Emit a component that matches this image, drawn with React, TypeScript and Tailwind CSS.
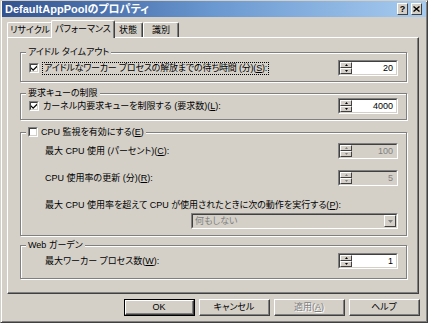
import React, { FC, ReactNode } from 'react'

const font = "font-['Liberation_Sans','Noto_Sans_CJK_JP',sans-serif] [font-feature-settings:'palt']"

const Arrow: FC<{ up?: boolean; color?: string; small?: boolean }> = ({ up, color = '#000', small }) => {
  const w = small ? 3 : 5
  const h = small ? 2 : 3
  return (
    <svg width={w} height={h} viewBox={`0 0 ${w} ${h}`}>
      <polygon points={up ? `${w / 2},0 ${w},${h} 0,${h}` : `0,0 ${w},0 ${w / 2},${h}`} fill={color} />
    </svg>
  )
}

const SpinBtn: FC<{ up?: boolean; disabled?: boolean }> = ({ up, disabled }) => (
  <div className="flex flex-1 items-center justify-center border border-t-white border-l-white border-r-[#404040] border-b-[#404040] bg-[#d4d0c8]">
    <Arrow up={up} small color={disabled ? '#808080' : '#000'} />
  </div>
)

const Spinner: FC<{ value: string; disabled?: boolean }> = ({ value, disabled }) => (
  <div className="h-[16px] w-[60px] border border-[#808080] border-r-white border-b-white">
    <div className="flex h-full w-full border border-[#404040] border-r-[#d4d0c8] border-b-[#d4d0c8]">
      <div className="flex w-[12px] flex-col">
        <SpinBtn up disabled={disabled} />
        <SpinBtn disabled={disabled} />
      </div>
      <div
        className={`flex flex-1 items-center justify-end pr-[3px] leading-[12px] ${
          disabled ? 'bg-[#d4d0c8] text-[#808080]' : 'bg-white text-black'
        }`}
      >
        {value}
      </div>
    </div>
  </div>
)

const Check: FC<{ checked?: boolean }> = ({ checked }) => (
  <div className="h-[10px] w-[10px] shrink-0 border border-[#808080] border-r-white border-b-white">
    <div className="flex h-full w-full items-center justify-center border border-[#404040] border-r-[#d4d0c8] border-b-[#d4d0c8] bg-white">
      {checked && (
        <svg width="6" height="6" viewBox="0 0 7 7">
          <path d="M0 2.5 L2.5 5 L7 0.5 V2.5 L2.5 7 L0 4.5 Z" fill="#000" />
        </svg>
      )}
    </div>
  </div>
)

const Group: FC<{ label: ReactNode; className?: string; children: ReactNode }> = ({ label, className, children }) => (
  <div
    className={`relative border border-[#808080] shadow-[1px_1px_0_#fff,inset_1px_1px_0_#fff] ${className ?? ''}`}
  >
    <div className="absolute -top-[7px] left-[5px] flex items-center gap-[3px] bg-[#d4d0c8] px-[2px] leading-[12px]">
      {label}
    </div>
    {children}
  </div>
)

const Button: FC<{ children: ReactNode; def?: boolean; disabled?: boolean }> = ({ children, def, disabled }) => (
  <div className={`h-[17px] w-[71px] ${def ? 'border border-black' : ''}`}>
    <div className="h-full w-full border border-t-white border-l-white border-r-[#404040] border-b-[#404040]">
      <div
        className={`flex h-full w-full items-center justify-center border-r border-b border-[#808080] leading-[12px] ${
          disabled ? 'text-[#808080] [text-shadow:1px_1px_0_#fff]' : 'text-black'
        }`}
      >
        {children}
      </div>
    </div>
  </div>
)

const Tab: FC<{ children: ReactNode; w: string; active?: boolean }> = ({ children, w, active }) => (
  <div
    className={`flex items-center justify-center rounded-t-[2px] border border-b-0 border-t-white border-l-white border-r-[#404040] bg-[#d4d0c8] leading-[12px] shadow-[inset_-1px_0_0_#808080] ${w} ${
      active ? 'relative z-10 -mx-[2px] -mb-px h-[18px] pb-[2px]' : 'h-[15px]'
    }`}
  >
    {children}
  </div>
)

const App: FC = () => {
  return (
    <div className={`h-[323px] w-[428px] bg-[#d4d0c8] text-[9px] text-black ${font}`}>
      <div className="flex h-full w-full flex-col border border-t-[#d4d0c8] border-l-[#d4d0c8] border-r-[#404040] border-b-[#404040] shadow-[inset_1px_1px_0_#fff,inset_-1px_-1px_0_#808080]">
        {/* title bar */}
        <div className="mx-[1px] flex h-[16px] items-center justify-between bg-gradient-to-r from-[#34538f] via-[#6a98d0] to-[#a8ccf0] pl-[3px] pr-[4px]">
          <span className="text-[11px] font-bold leading-[14px] text-white">DefaultAppPoolのプロパティ</span>
          <div className="flex gap-[3px]">
            <div className="flex h-[12px] w-[11px] items-center justify-center border border-t-white border-l-white border-r-[#404040] border-b-[#404040] bg-[#d4d0c8] text-[9px] font-bold leading-none">
              ?
            </div>
            <div className="flex h-[12px] w-[11px] items-center justify-center border border-t-white border-l-white border-r-[#404040] border-b-[#404040] bg-[#d4d0c8]">
              <svg width="7" height="6" viewBox="0 0 7 6">
                <path d="M0.5 0.5 L6.5 5.5 M6.5 0.5 L0.5 5.5" stroke="#000" strokeWidth="1.4" />
              </svg>
            </div>
          </div>
        </div>

        {/* tabs */}
        <div className="flex h-[20px] items-end pl-[6px]">
          <Tab w="w-[46px]">リサイクル</Tab>
          <Tab w="w-[64px]" active>
            パフォーマンス
          </Tab>
          <Tab w="w-[30px]">状態</Tab>
          <Tab w="w-[36px]">識別</Tab>
        </div>

        {/* panel */}
        <div className="ml-[6px] h-[257px] w-[412px] border border-t-white border-l-white border-r-[#404040] border-b-[#404040] pt-[14px] pl-[12px] shadow-[inset_-1px_-1px_0_#808080]">
          <div className="flex w-[387px] flex-col">
            <Group label="アイドル タイムアウト" className="pt-[7px] pb-[5px]">
              <div className="flex h-[16px] items-center justify-between pl-[8px] pr-[8px]">
                <div className="flex items-center gap-[3px]">
                  <Check checked />
                  <span className="border border-dotted border-black px-[1px] leading-[11px] tracking-[-0.2px]">
                    アイドルなワーカー プロセスの解放までの待ち時間 (分)(<u>S</u>):
                  </span>
                </div>
                <Spinner value="20" />
              </div>
            </Group>

            <Group label="要求キューの制限" className="mt-[11px] pt-[4px] pb-[5px]">
              <div className="flex h-[16px] items-center justify-between pl-[8px] pr-[8px]">
                <div className="flex items-center gap-[4px]">
                  <Check checked />
                  <span className="leading-[12px]">
                    カーネル内要求キューを制限する (要求数)(<u>L</u>):
                  </span>
                </div>
                <Spinner value="4000" />
              </div>
            </Group>

            <Group
              label={
                <>
                  <Check />
                  <span>
                    CPU 監視を有効にする(<u>E</u>)
                  </span>
                </>
              }
              className="mt-[12px] pt-[10px] pb-[6px]"
            >
              <div className="flex h-[16px] items-center justify-between pl-[24px] pr-[8px]">
                <span className="leading-[12px]">
                  最大 CPU 使用 (パーセント)(<u>C</u>):
                </span>
                <Spinner value="100" disabled />
              </div>
              <div className="mt-[11px] flex h-[16px] items-center justify-between pl-[24px] pr-[8px]">
                <span className="leading-[12px]">
                  CPU 使用率の更新 (分)(<u>R</u>):
                </span>
                <Spinner value="5" disabled />
              </div>
              <div className="mt-[13px] pl-[24px] leading-[12px]">
                最大 CPU 使用率を超えて CPU が使用されたときに次の動作を実行する(<u>P</u>):
              </div>
              <div className="mt-[2px] flex justify-end pr-[8px]">
                <div className="h-[16px] w-[207px] border border-[#808080] border-r-white border-b-white">
                  <div className="flex h-full w-full items-center border border-[#404040] border-r-[#d4d0c8] border-b-[#d4d0c8] bg-[#d4d0c8]">
                    <span className="flex-1 pl-[2px] leading-[12px] text-[#808080]">何もしない</span>
                    <div className="flex h-full w-[12px] items-center justify-center border border-t-white border-l-white border-r-[#404040] border-b-[#404040]">
                      <Arrow color="#808080" />
                    </div>
                  </div>
                </div>
              </div>
            </Group>

            <Group label="Web ガーデン" className="mt-[9px] pt-[7px] pb-[9px]">
              <div className="flex h-[16px] items-center justify-between pl-[24px] pr-[8px]">
                <span className="leading-[12px]">
                  最大ワーカー プロセス数(<u>W</u>):
                </span>
                <Spinner value="1" />
              </div>
            </Group>
          </div>
        </div>

        {/* buttons */}
        <div className="mt-[5px] flex justify-end gap-[4px] pr-[7px]">
          <Button def>OK</Button>
          <Button>キャンセル</Button>
          <Button disabled>
            適用(<u>A</u>)
          </Button>
          <Button>ヘルプ</Button>
        </div>
      </div>
    </div>
  )
}

export default App
